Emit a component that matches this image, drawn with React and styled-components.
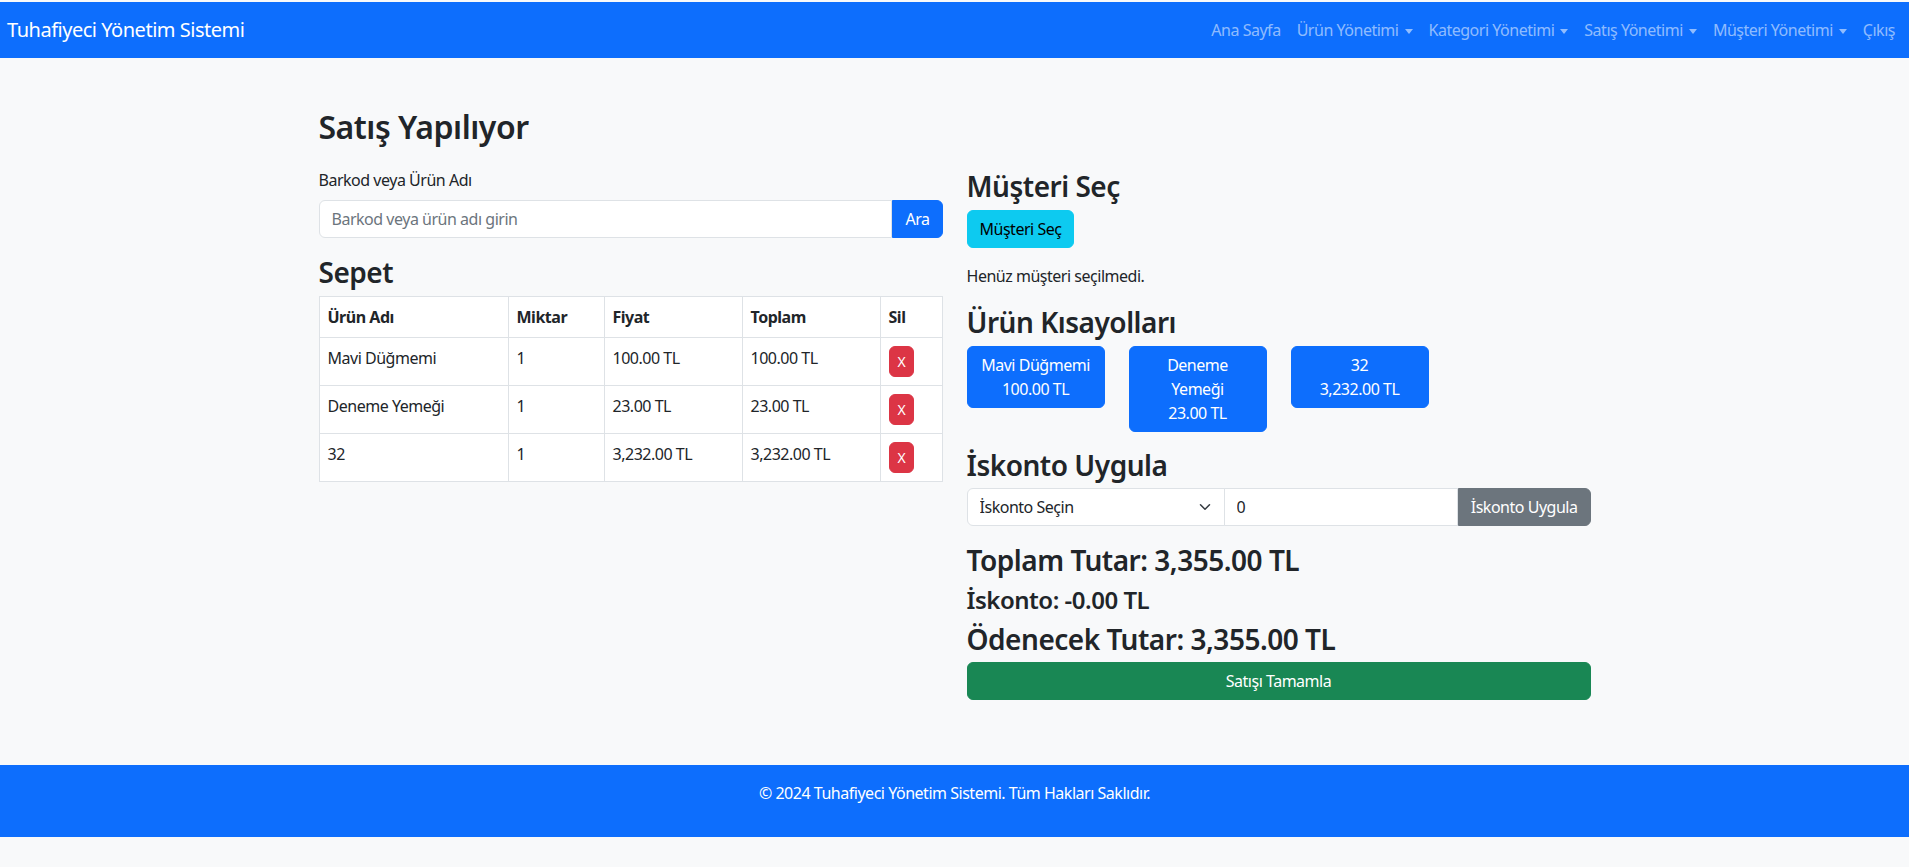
import styled, { createGlobalStyle, css } from "styled-components";

const FONT = `"Noto Sans", "Liberation Sans", sans-serif`;
const TRACKING = "-0.03em";

const GlobalStyle = createGlobalStyle`
  html,
  body {
    margin: 0;
    padding: 0;
    background-color: #f8f9fa;
    color: #212529;
    font-family: ${FONT};
    font-size: 16px;
    line-height: 1.5;
    letter-spacing: ${TRACKING};
  }

  * {
    box-sizing: border-box;
  }

  #root {
    min-height: 100vh;
  }
`;

const colors = {
  primary: { bg: "#0d6efd", fg: "#fff" },
  info: { bg: "#0dcaf0", fg: "#000" },
  secondary: { bg: "#6c757d", fg: "#fff" },
  success: { bg: "#198754", fg: "#fff" },
  danger: { bg: "#dc3545", fg: "#fff" }
};

const StyledNavbar = styled.nav`
  height: 56px;
  margin-top: 2px;
  display: flex;
  align-items: center;
  justify-content: space-between;
  padding: 0 6px 0 7px;
  background-color: #0d6efd;

  .navbar__brand {
    color: #fff;
    font-size: 20px;
    line-height: 30px;
    text-decoration: none;
  }

  .navbar__list {
    margin: 0;
    padding: 0;
    display: flex;
    list-style: none;
  }
`;

const NavLink = styled.a`
  display: flex;
  align-items: center;
  padding: 8px;
  font-size: 16px;
  line-height: 24px;
  text-decoration: none;
  color: rgba(255, 255, 255, 0.55);

  ${({ $dropdown }) =>
    $dropdown &&
    css`
      &::after {
        content: "";
        margin-left: 6px;
        margin-top: 2px;
        border-top: 5px solid currentColor;
        border-left: 4px solid transparent;
        border-right: 4px solid transparent;
      }
    `}
`;

const Main = styled.main`
  width: 1272px;
  margin: 0 auto;
  padding: 48px 0 65px;
`;

const PageTitle = styled.h2`
  margin: 0 0 24px;
  padding-top: 2px;
  height: 38.4px;
  font-size: 32px;
  font-weight: 600;
  line-height: 1.2;
`;

const Columns = styled.div`
  display: grid;
  grid-template-columns: 1fr 1fr;
  column-gap: 24px;
  align-items: start;
`;

const Column = styled.section`
  display: flex;
  flex-direction: column;
`;

const SectionTitle = styled.h3`
  margin: 0 0 8px;
  padding-top: 2px;
  height: ${({ $small }) => ($small ? 28.8 : 33.6)}px;
  font-size: ${({ $small }) => ($small ? 24 : 28)}px;
  font-weight: 600;
  line-height: 1.2;
`;

const FieldLabel = styled.label`
  display: block;
  margin-bottom: 8px;
`;

const InputGroup = styled.div`
  display: flex;
  height: 38px;
  margin-bottom: 16px;
`;

const TextInput = styled.input`
  flex: 1 1 auto;
  min-width: 0;
  padding: 6px 12px;
  font-family: ${FONT};
  font-size: 16px;
  line-height: 24px;
  letter-spacing: ${TRACKING};
  color: #212529;
  background-color: #fff;
  border: 1px solid #dee2e6;
  border-radius: ${({ $joined }) => ($joined ? "0" : "6px 0 0 6px")};
  margin-left: ${({ $joined }) => ($joined ? "-1px" : "0")};
  outline: none;

  &::placeholder {
    color: #6c757d;
  }
`;

const SelectWrap = styled.div`
  position: relative;
  flex: 0 0 258px;

  select {
    width: 100%;
    height: 100%;
    padding: 6px 36px 6px 12px;
    font-family: ${FONT};
    font-size: 16px;
    line-height: 24px;
    letter-spacing: ${TRACKING};
    color: #212529;
    background-color: #fff;
    border: 1px solid #dee2e6;
    border-radius: 6px 0 0 6px;
    appearance: none;
    outline: none;
  }

  svg {
    position: absolute;
    top: 13px;
    right: 14px;
    pointer-events: none;
  }
`;

const Button = styled.button`
  display: ${({ $block }) => ($block ? "block" : "inline-block")};
  width: ${({ $block }) => ($block ? "100%" : "auto")};
  padding: ${({ $small }) => ($small ? "4px 8px" : "6px 12px")};
  font-family: ${FONT};
  font-size: ${({ $small }) => ($small ? 14 : 16)}px;
  line-height: ${({ $small }) => ($small ? 21 : 24)}px;
  letter-spacing: ${TRACKING};
  text-align: center;
  cursor: pointer;
  color: ${({ $variant }) => colors[$variant].fg};
  background-color: ${({ $variant }) => colors[$variant].bg};
  border: 1px solid ${({ $variant }) => colors[$variant].bg};
  border-radius: ${({ $radius }) => $radius || "6px"};
  flex-shrink: 0;
`;

const CustomerBlock = styled.div`
  margin-bottom: 16px;
`;

const Note = styled.p`
  margin: 0 0 16px;
`;

const StyledTable = styled.table`
  width: 100%;
  table-layout: fixed;
  border-collapse: collapse;
  background-color: #fff;

  th,
  td {
    padding: 8px;
    text-align: left;
    vertical-align: top;
    border: 1px solid #dee2e6;
  }

  th {
    font-weight: 700;
  }
`;

const ShortcutGrid = styled.div`
  display: grid;
  grid-template-columns: repeat(4, 1fr);
  column-gap: 24px;
  align-items: start;
  margin-bottom: 15px;

  span {
    display: block;
    white-space: nowrap;
  }
`;

const StyledFooter = styled.footer`
  padding: 16px 0;
  color: #fff;
  text-align: center;
  background-color: #0d6efd;

  p {
    margin: 0 0 16px;
  }
`;

const navItems = [
  { label: "Ana Sayfa" },
  { label: "Ürün Yönetimi", dropdown: true },
  { label: "Kategori Yönetimi", dropdown: true },
  { label: "Satış Yönetimi", dropdown: true },
  { label: "Müşteri Yönetimi", dropdown: true },
  { label: "Çıkış" }
];

const cart = [
  { name: "Mavi Düğmemi", qty: 1, price: "100.00 TL", total: "100.00 TL" },
  { name: "Deneme Yemeği", qty: 1, price: "23.00 TL", total: "23.00 TL" },
  { name: "32", qty: 1, price: "3,232.00 TL", total: "3,232.00 TL" }
];

const shortcuts = [
  ["Mavi Düğmemi", "100.00 TL"],
  ["Deneme", "Yemeği", "23.00 TL"],
  ["32", "3,232.00 TL"]
];

const ChevronDown = () => (
  <svg width="12" height="12" viewBox="0 0 16 16">
    <path
      d="m2 5 6 6 6-6"
      fill="none"
      stroke="#343a40"
      strokeWidth="2"
      strokeLinecap="round"
      strokeLinejoin="round"
    />
  </svg>
);

const Navbar = () => (
  <StyledNavbar>
    <a className="navbar__brand" href="#">
      Tuhafiyeci Yönetim Sistemi
    </a>
    <ul className="navbar__list">
      {navItems.map(item => (
        <li key={item.label}>
          <NavLink href="#" $dropdown={item.dropdown}>
            {item.label}
          </NavLink>
        </li>
      ))}
    </ul>
  </StyledNavbar>
);

const CartTable = () => (
  <StyledTable>
    <colgroup>
      <col style={{ width: 189 }} />
      <col style={{ width: 96 }} />
      <col style={{ width: 138 }} />
      <col style={{ width: 138 }} />
      <col />
    </colgroup>
    <thead>
      <tr>
        <th>Ürün Adı</th>
        <th>Miktar</th>
        <th>Fiyat</th>
        <th>Toplam</th>
        <th>Sil</th>
      </tr>
    </thead>
    <tbody>
      {cart.map(row => (
        <tr key={row.name}>
          <td>{row.name}</td>
          <td>{row.qty}</td>
          <td>{row.price}</td>
          <td>{row.total}</td>
          <td>
            <Button $variant="danger" $small>
              X
            </Button>
          </td>
        </tr>
      ))}
    </tbody>
  </StyledTable>
);

const App = () => (
  <>
    <GlobalStyle />
    <Navbar />
    <Main>
      <PageTitle>Satış Yapılıyor</PageTitle>
      <Columns>
        <Column>
          <FieldLabel htmlFor="barcode">Barkod veya Ürün Adı</FieldLabel>
          <InputGroup>
            <TextInput id="barcode" placeholder="Barkod veya ürün adı girin" />
            <Button $variant="primary" $radius="0 6px 6px 0">
              Ara
            </Button>
          </InputGroup>
          <SectionTitle>Sepet</SectionTitle>
          <CartTable />
        </Column>

        <Column>
          <SectionTitle>Müşteri Seç</SectionTitle>
          <CustomerBlock>
            <Button $variant="info">Müşteri Seç</Button>
          </CustomerBlock>
          <Note>Henüz müşteri seçilmedi.</Note>

          <SectionTitle>Ürün Kısayolları</SectionTitle>
          <ShortcutGrid>
            {shortcuts.map(lines => (
              <Button key={lines.join()} $variant="primary" $block>
                {lines.map(line => (
                  <span key={line}>{line}</span>
                ))}
              </Button>
            ))}
          </ShortcutGrid>

          <SectionTitle>İskonto Uygula</SectionTitle>
          <InputGroup>
            <SelectWrap>
              <select defaultValue="">
                <option value="">İskonto Seçin</option>
              </select>
              <ChevronDown />
            </SelectWrap>
            <TextInput $joined defaultValue="0" />
            <Button $variant="secondary" $radius="0 6px 6px 0">
              İskonto Uygula
            </Button>
          </InputGroup>

          <SectionTitle>Toplam Tutar: 3,355.00 TL</SectionTitle>
          <SectionTitle $small>İskonto: -0.00 TL</SectionTitle>
          <SectionTitle>Ödenecek Tutar: 3,355.00 TL</SectionTitle>
          <Button $variant="success" $block>
            Satışı Tamamla
          </Button>
        </Column>
      </Columns>
    </Main>
    <StyledFooter>
      <p>© 2024 Tuhafiyeci Yönetim Sistemi. Tüm Hakları Saklıdır.</p>
    </StyledFooter>
  </>
);

export default App;
